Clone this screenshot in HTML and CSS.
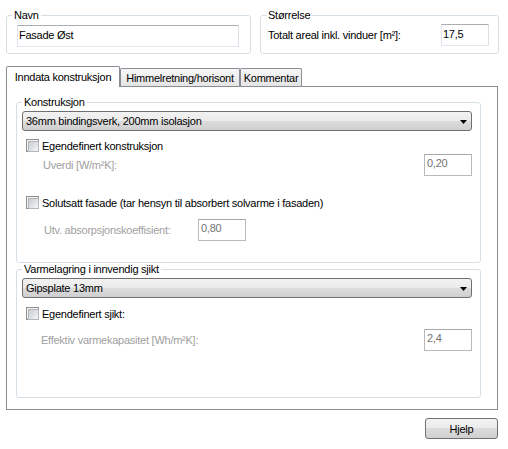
FILE: index.html
```html
<!DOCTYPE html>
<html>
<head>
<meta charset="utf-8">
<link rel="stylesheet" href="styles.css">
</head>
<body>
<div class="top">
  <fieldset class="group navn">
    <legend>Navn</legend>
    <div class="gbody navn-body">
      <div class="textbox">Fasade Øst</div>
    </div>
  </fieldset>
  <fieldset class="group size">
    <legend>Størrelse</legend>
    <div class="gbody size-body">
      <span>Totalt areal inkl. vinduer [m²]:</span>
      <div class="textbox small">17,5</div>
    </div>
  </fieldset>
</div>

<div class="tabs">
  <div class="tab active">Inndata konstruksjon</div>
  <div class="tab t2">Himmelretning/horisont</div>
  <div class="tab t3">Kommentar</div>
</div>

<div class="panel">
  <fieldset class="group inner g1">
    <legend>Konstruksjon</legend>
    <div class="gbody g1-body">
      <div class="combo">
        <span>36mm bindingsverk, 200mm isolasjon</span>
        <svg class="arrow" width="7" height="4" viewBox="0 0 7 4"><polygon points="0,0 7,0 3.5,4" fill="#000"/></svg>
      </div>
      <div class="check c1"><span class="cb"></span><span>Egendefinert konstruksjon</span></div>
      <div class="field f1"><span class="dis">Uverdi [W/m²K]:</span><div class="textbox small disabled">0,20</div></div>
      <div class="check c2"><span class="cb"></span><span>Solutsatt fasade (tar hensyn til absorbert solvarme i fasaden)</span></div>
      <div class="field f2"><span class="dis lbl-fixed">Utv. absorpsjonskoeffisient:</span><div class="textbox small disabled">0,80</div></div>
    </div>
  </fieldset>

  <fieldset class="group inner g2">
    <legend>Varmelagring i innvendig sjikt</legend>
    <div class="gbody g2-body">
      <div class="combo">
        <span>Gipsplate 13mm</span>
        <svg class="arrow" width="7" height="4" viewBox="0 0 7 4"><polygon points="0,0 7,0 3.5,4" fill="#000"/></svg>
      </div>
      <div class="check c3"><span class="cb"></span><span>Egendefinert sjikt:</span></div>
      <div class="field f3"><span class="dis">Effektiv varmekapasitet [Wh/m²K]:</span><div class="textbox small disabled">2,4</div></div>
    </div>
  </fieldset>
</div>

<div class="footer">
  <div class="button">Hjelp</div>
</div>
</body>
</html>
```

FILE: styles.css
```css
* { box-sizing: border-box; }

body {
  margin: 0;
  background: #ffffff;
  font-family: "Liberation Sans", Arial, sans-serif;
  font-size: 11px;
  letter-spacing: -0.25px;
  color: #000000;
  width: 508px;
}

.top {
  display: flex;
  gap: 9px;
  padding: 9px 0 0 6px;
}

fieldset.group {
  margin: 0;
  padding: 0;
  border: 1px solid #d5dfe5;
  border-radius: 3px;
  min-width: 0;
}

legend {
  margin-left: 5px;
  padding: 0 2px;
  line-height: 13px;
  height: 13px;
}

.navn { width: 245px; }
.size { width: 239px; }

.navn-body { padding: 3px 11px 6px 10px; }

.size-body {
  padding: 2px 9px 7px 7px;
  display: flex;
  align-items: center;
  justify-content: space-between;
}

.textbox {
  height: 22px;
  border: 1px solid #dbdfe6;
  border-top-color: #abadb3;
  border-left-color: #e2e3ea;
  border-bottom-color: #e3e9ef;
  background: #ffffff;
  padding: 3px 2px 0 1px;
  line-height: 13px;
  white-space: nowrap;
}

.textbox.small { width: 48px; }

.textbox.disabled {
  border: 1px solid #b9b9b9;
  border-top-color: #a9a9a9;
  color: #737373;
  padding-left: 2px;
  padding-top: 2px;
}

.tabs {
  display: flex;
  align-items: flex-end;
  margin: 12px 0 0 6px;
}

.tab {
  height: 18px;
  border: 1px solid #898c95;
  border-bottom: none;
  border-radius: 2px 2px 0 0;
  background: linear-gradient(#f7f7f7, #e4e4e4);
  display: flex;
  align-items: center;
  justify-content: center;
  white-space: nowrap;
}

.tab.active {
  position: relative;
  z-index: 1;
  width: 114px;
  height: 21px;
  margin-bottom: -1px;
  background: #ffffff;
  padding-bottom: 1px;
}

.tab.t2 { width: 120px; }
.tab.t3 { width: 62px; }

.panel {
  width: 492px;
  height: 324px;
  margin-left: 6px;
  border: 1px solid #898c95;
  background: #ffffff;
  padding: 9px 0 0 9px;
}

.inner { width: 465px; }

.g1-body { padding: 2px 8px 21px 5px; }
.g2 { margin-top: 6px; }
.g2-body { padding: 2px 8px 46px 5px; }

.combo {
  height: 20px;
  border: 1px solid #707070;
  border-radius: 3px;
  background: linear-gradient(#f2f2f2 0%, #ebebeb 50%, #dddddd 50%, #cfcfcf 100%);
  display: flex;
  align-items: center;
  justify-content: space-between;
  padding: 0 4px 0 3px;
  white-space: nowrap;
}

.arrow { display: block; margin-top: 1px; }

.check {
  display: flex;
  align-items: center;
  gap: 3px;
  height: 13px;
  padding-left: 4px;
  white-space: nowrap;
}

.c1 { margin-top: 8px; }
.c2 { margin-top: 20px; }
.c3 { margin-top: 9px; }

.cb {
  width: 13px;
  height: 13px;
  border: 1px solid #8f8f8f;
  background: #f4f4f4;
  padding: 1px;
  flex: none;
}

.cb::after {
  content: "";
  display: block;
  width: 9px;
  height: 9px;
  border: 1px solid #b3b7bc;
  background: linear-gradient(135deg, #c9cdd3, #f5f6f7);
}

.field {
  display: flex;
  align-items: center;
  padding-left: 21px;
  white-space: nowrap;
}

.field .textbox { margin-left: auto; }

.f1 { margin-top: 2px; }
.f2 { margin-top: 10px; padding-left: 22px; }
.f2 .textbox { margin-left: 0; }
.f3 { margin-top: 9px; padding-left: 19px; }

.lbl-fixed { width: 154px; }

.dis { color: #a0a0a0; }

.footer {
  display: flex;
  justify-content: flex-end;
  padding: 8px 10px 0 0;
}

.button {
  width: 73px;
  height: 21px;
  border: 1px solid #707070;
  border-radius: 3px;
  background: linear-gradient(#f2f2f2 0%, #ebebeb 50%, #dddddd 50%, #cfcfcf 100%);
  display: flex;
  align-items: center;
  justify-content: center;
}
```
